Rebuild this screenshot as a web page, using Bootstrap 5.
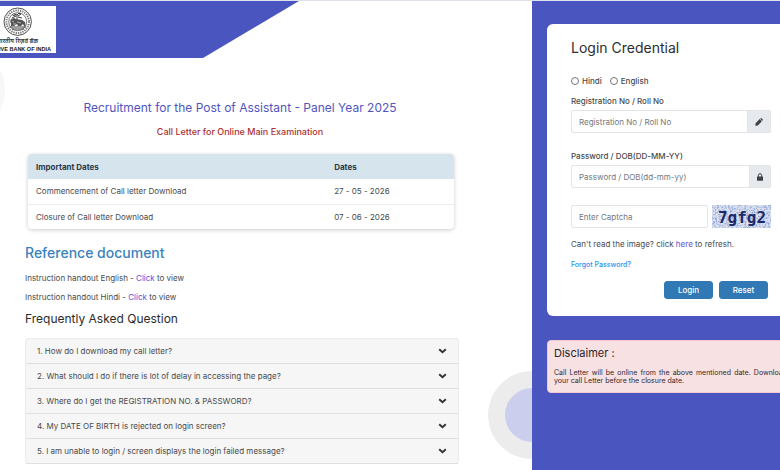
<!DOCTYPE html>
<html lang="en">
<head>
<meta charset="utf-8">
<meta name="viewport" content="width=device-width, initial-scale=1">
<title>Call Letter Download</title>
<link href="https://cdn.jsdelivr.net/npm/bootstrap@5.3.0/dist/css/bootstrap.min.css" rel="stylesheet">
<style>
:root { --indigo: #4b55bf; --steel: #3079b5; }
body { font-family: Inter, "Noto Sans", sans-serif; font-size: 8px; line-height: 12px; color: #484a4d; background: #fff; overflow: hidden; }
a { color: #5a50d8; text-decoration: none; }
.page { min-height: 100vh; border-top: 1px solid #dfe1f1; }
.main-side { min-width: 0; position: relative; overflow: hidden; }
.login-side { flex: 0 0 248px; background: var(--indigo); overflow: hidden; position: relative; }
.banner { height: 57px; width: 299px; background: var(--indigo); clip-path: polygon(0 0, 100% 0, 203px 100%, 0 100%); padding-top: 5px; }
.logo { display: block; width: 56px; height: 47px; background: #fff; }
.ring { position: absolute; border-radius: 50%; }
.ring-big { width: 88px; height: 88px; right: -44px; bottom: 11px; background: #ececec; }
.ring-small { width: 54px; height: 54px; right: -27px; bottom: 28px; background: #cbceec; }
.ring-left { width: 90px; height: 90px; left: -85px; top: 44px; background: #f7f7f7; z-index: -1; }
.content-area { padding: 42px 73px 0 25px; position: relative; }
h1, .exam { padding-right: 4px; }
h1 { font-size: 12px; line-height: 16px; color: #5056c0; font-weight: 400; margin: 0 0 10px; }
.exam { font-size: 9px; line-height: 12px; color: #ac3232; font-weight: 500; margin: 0 0 16px; }
.dates { margin: 0 5px 14px 3px; border-radius: 4px; box-shadow: 0 1px 4px #0003; overflow: hidden; }
.dates table { margin: 0; color: inherit; font-size: 8px; --bs-table-bg: transparent; --bs-table-color: #484a4d; }
.dates th, .dates td { padding: 6px 8px; line-height: 12px; height: 25px; border-color: #ededed; }
.dates thead th { background: #d6e4ed; color: #2c3a48; font-weight: 700; border: 0; }
.dates tbody tr:last-child td { border: 0; }
.dates th:first-child { width: 70%; }
h2 { font-size: 14px; line-height: 20px; color: #3a82bd; font-weight: 500; margin: 0 0 9px; }
.doc { margin: 0 0 7px; }
h3 { font-size: 12px; line-height: 16px; color: #2b2b2b; font-weight: 400; margin: 0 0 11px; padding-top: 1px; }
.faq { border: 1px solid #ececec; border-bottom: 0; border-radius: 3px; background: #f6f6f6; }
.faq button { height: 25px; padding: 0 11px; border: 0; border-bottom: 1px solid #dfdfdf; background: none; color: #484a4d; }
.login-box { background: #fff; border-radius: 6px; margin: 23px -16px 0 15px; padding: 15px 25px 17px 24px; }
.login-box h2 { font-size: 14px; line-height: 18px; color: #2c2e31; font-weight: 400; margin: 0 0 18px; }
.pick { gap: 8px; line-height: 12px; margin-bottom: 8px; }
.pick label, .field-label { font-weight: 500; }
.pick input { width: 8px; height: 8px; margin: 0 3px 0 0; }
.field-label { display: block; margin-bottom: 3px; }
.login-box .form-control { font-size: 8px; line-height: 12px; height: 23px; min-height: 0; padding: 0 7px; border-color: #e2e4e8; border-radius: 2px; color: #484a4d; }
.login-box .form-control::placeholder { color: #74777c; opacity: 1; }
.input-group { margin-bottom: 17px; }
.input-group-text { padding: 0 7px; background: #e6e9ed; border-color: #e2e4e8; border-radius: 2px; color: #3f4246; }
.captcha { gap: 4px; margin: 0 0 10px; }
.captcha svg { flex: 0 0 59px; }
.forgot { font-size: 7px; color: #2a8ff0; font-weight: 500; }
.actions { gap: 6px; margin: 10px 3px 0 0; }
.actions .btn { width: 49px; height: 18px; padding: 0; font-size: 8px; line-height: 16px; font-weight: 500; background: var(--steel); border-color: var(--steel); color: #fff; border-radius: 3px; }
.notice { margin: 24px -16px 0 15px; padding: 5px 8px 7px 6px; background: #f7e1e2; border: 1px solid #f3c8d2; border-radius: 4px; color: #35292b; }
.notice h3 { font-size: 11px; margin: 0 0 9px; padding: 0; font-weight: 400; color: #2b2527; line-height: 14px; }
.notice p { font-size: 7px; line-height: 8px; text-align: justify; margin: 0; }
</style>
<script src="https://cdn.jsdelivr.net/npm/bootstrap@5.3.0/dist/js/bootstrap.bundle.min.js" defer></script>
</head>
<body>
<div class="page d-flex">
  <main class="main-side flex-grow-1">
    <header class="banner">
      <svg class="logo" viewBox="0 0 56 47" role="img" aria-label="Reserve Bank of India">
        <g fill="none" stroke="#3c3c3c">
          <circle cx="17.700" cy="15.700" r="13.700" stroke-width=".9"/>
          <circle cx="17.700" cy="15.700" r="11.300" stroke-width="2" stroke-dasharray="1.300 1" stroke="#777"/>
          <circle cx="17.700" cy="15.700" r="9" stroke-width=".7"/>
          <path d="M17 17V9M15.500 10l-3-1M18 10l3-2M14 8l3 1 2-2 2 1M12 12l4-2M18 11l4 1" stroke-width="1"/>
          <path d="M9.500 21h16.500M12 23h12" stroke-width="1"/>
        </g>
        <path d="M11 20v-3l-1-1 1-3 3-1 2 1 6 1 3 2 .5 4H24l-1-2-2 2h-3l-1-2-3 2z" fill="#555"/>
        <path d="M12 15l2 1M17 16l4 1M13 18h3" stroke="#ddd" stroke-width=".7"/>
        <text x="38" y="37" text-anchor="end" font-size="6" font-weight="600" fill="#333" font-family="Noto Sans, sans-serif">भारतीय रिज़र्व बैंक</text>
        <text x="51" y="45" text-anchor="end" font-family="Liberation Sans, sans-serif" font-size="5.500" font-weight="700" fill="#151515">RESERVE BANK OF INDIA</text>
      </svg>
    </header>
    <span class="ring ring-left"></span>
    <span class="ring ring-big"></span>
    <span class="ring ring-small"></span>
    <div class="content-area">
      <h1 class="text-center">Recruitment for the Post of Assistant - Panel Year 2025</h1>
      <p class="exam text-center">Call Letter for Online Main Examination</p>
      <div class="dates">
        <table class="table">
          <thead><tr><th scope="col">Important Dates</th><th scope="col">Dates</th></tr></thead>
          <tbody>
            <tr><td>Commencement of Call letter Download</td><td>27 - 05 - 2026</td></tr>
            <tr><td>Closure of Call letter Download</td><td>07 - 06 - 2026</td></tr>
          </tbody>
        </table>
      </div>
      <h2>Reference document</h2>
      <p class="doc">Instruction handout English - <a href="#">Click</a> to view</p>
      <p class="doc">Instruction handout Hindi - <a href="#">Click</a> to view</p>
      <h3>Frequently Asked Question</h3>
      <div class="faq">
        <button type="button" class="w-100 d-flex align-items-center justify-content-between">1. How do I download my call letter? <svg width="9" height="6" viewBox="0 0 9 6" aria-hidden="true"><path d="M1.200 1.200l3.300 3 3.300-3" fill="none" stroke="#333" stroke-width="1.900"/></svg></button>
        <button type="button" class="w-100 d-flex align-items-center justify-content-between">2. What should I do if there is lot of delay in accessing the page? <svg width="9" height="6" viewBox="0 0 9 6" aria-hidden="true"><path d="M1.200 1.200l3.300 3 3.300-3" fill="none" stroke="#333" stroke-width="1.900"/></svg></button>
        <button type="button" class="w-100 d-flex align-items-center justify-content-between">3. Where do I get the REGISTRATION NO. &amp; PASSWORD? <svg width="9" height="6" viewBox="0 0 9 6" aria-hidden="true"><path d="M1.200 1.200l3.300 3 3.300-3" fill="none" stroke="#333" stroke-width="1.900"/></svg></button>
        <button type="button" class="w-100 d-flex align-items-center justify-content-between">4. My DATE OF BIRTH is rejected on login screen? <svg width="9" height="6" viewBox="0 0 9 6" aria-hidden="true"><path d="M1.200 1.200l3.300 3 3.300-3" fill="none" stroke="#333" stroke-width="1.900"/></svg></button>
        <button type="button" class="w-100 d-flex align-items-center justify-content-between">5. I am unable to login / screen displays the login failed message? <svg width="9" height="6" viewBox="0 0 9 6" aria-hidden="true"><path d="M1.200 1.200l3.300 3 3.300-3" fill="none" stroke="#333" stroke-width="1.900"/></svg></button>
      </div>
    </div>
  </main>
  <aside class="login-side">
    <form class="login-box">
      <h2>Login Credential</h2>
      <div class="pick d-flex">
        <div class="d-flex align-items-center"><input type="radio" name="lang" id="hi"><label for="hi">Hindi</label></div>
        <div class="d-flex align-items-center"><input type="radio" name="lang" id="en"><label for="en">English</label></div>
      </div>
      <label class="field-label" for="reg">Registration No / Roll No</label>
      <div class="input-group">
        <input type="text" class="form-control" id="reg" placeholder="Registration No / Roll No">
        <span class="input-group-text"><svg width="8" height="8" viewBox="0 0 8 8" aria-hidden="true"><path d="M.3 7.700l.3-2.500L4.700 1.100 6.900 3.300 2.800 7.400zM5.200.7l.5-.5q.4-.3.800 0l1.300 1.300q.3.400 0 .8l-.5.500z" fill="currentColor"/></svg></span>
      </div>
      <label class="field-label" for="pwd">Password / DOB(DD-MM-YY)</label>
      <div class="input-group">
        <input type="password" class="form-control" id="pwd" placeholder="Password / DOB(dd-mm-yy)">
        <span class="input-group-text"><svg width="6" height="8" viewBox="0 0 6 8" aria-hidden="true"><path d="M1.300 4V2.400a1.700 1.700 0 0 1 3.400 0V4" fill="none" stroke="currentColor" stroke-width="1"/><rect y="3.500" width="6" height="4.300" rx=".5" fill="currentColor"/></svg></span>
      </div>
      <div class="captcha d-flex">
        <input type="text" class="form-control" aria-label="Enter Captcha" placeholder="Enter Captcha">
        <svg width="59" height="23" viewBox="0 0 59 23" role="img" aria-label="Captcha image">
          <filter id="grain" x="0" y="0" width="100%" height="100%"><feTurbulence type="fractalNoise" baseFrequency=".55" numOctaves="2" seed="4"/><feColorMatrix values="0 0 0 0 .35  0 0 0 0 .43  0 0 0 0 .70  5 0 0 0 -2.300"/></filter>
          <rect width="59" height="23" fill="#d9e0f0"/>
          <rect width="59" height="23" filter="url(#grain)"/>
          <text x="30" y="18" text-anchor="middle" font-family="DejaVu Sans Mono, monospace" font-size="16" font-weight="700" fill="#1c2b6b">7gfg2</text>
        </svg>
      </div>
      <div>Can't read the image? click <a href="#">here</a> to refresh.</div>
      <div class="mt-2"><a class="forgot" href="#">Forgot Password?</a></div>
      <div class="actions d-flex justify-content-end">
        <button type="button" class="btn">Login</button>
        <button type="reset" class="btn">Reset</button>
      </div>
    </form>
    <section class="notice">
      <h3>Disclaimer :</h3>
      <p>Call Letter will be online from the above mentioned date. Download your call Letter before the closure date.</p>
    </section>
  </aside>
</div>
</body>
</html>
